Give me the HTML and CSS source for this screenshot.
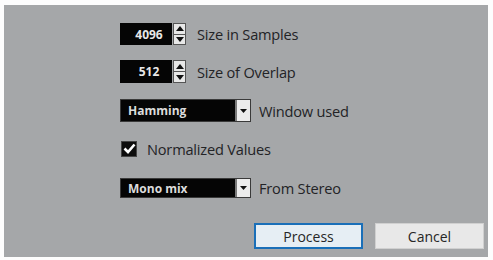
FILE: index.html
```html
<!DOCTYPE html>
<html>
<head>
<meta charset="utf-8">
<link rel="stylesheet" href="styles.css">
</head>
<body>
<div class="panel">
  <div class="form">
    <div class="row r1">
      <div class="spin">
        <div class="value">4096</div>
        <div class="arrows">
          <div class="arr"><svg width="8" height="5" viewBox="0 0 8 5"><path d="M0 5 L4 0 L8 5Z" fill="#111"/></svg></div>
          <div class="arr"><svg width="8" height="5" viewBox="0 0 8 5"><path d="M0 0 L4 5 L8 0Z" fill="#111"/></svg></div>
        </div>
      </div>
      <span class="label">Size in Samples</span>
    </div>
    <div class="row r2">
      <div class="spin">
        <div class="value">512</div>
        <div class="arrows">
          <div class="arr"><svg width="8" height="5" viewBox="0 0 8 5"><path d="M0 5 L4 0 L8 5Z" fill="#111"/></svg></div>
          <div class="arr"><svg width="8" height="5" viewBox="0 0 8 5"><path d="M0 0 L4 5 L8 0Z" fill="#111"/></svg></div>
        </div>
      </div>
      <span class="label">Size of Overlap</span>
    </div>
    <div class="row r3">
      <div class="select">
        <div class="sel-value">Hamming</div>
        <div class="sel-btn"><svg width="7" height="4" viewBox="0 0 7 4"><path d="M0 0 L3.5 4 L7 0Z" fill="#111"/></svg></div>
      </div>
      <span class="label">Window used</span>
    </div>
    <div class="row r4">
      <div class="check"><svg width="13" height="11" viewBox="0 0 13 11"><path d="M1.5 5.5 L5 9 L11.5 1.5" stroke="#fff" stroke-width="2.6" fill="none"/></svg></div>
      <span class="label">Normalized Values</span>
    </div>
    <div class="row r5">
      <div class="select short">
        <div class="sel-value">Mono mix</div>
        <div class="sel-btn"><svg width="7" height="4" viewBox="0 0 7 4"><path d="M0 0 L3.5 4 L7 0Z" fill="#111"/></svg></div>
      </div>
      <span class="label">From Stereo</span>
    </div>
  </div>
  <div class="buttons">
    <div class="btn primary">Process</div>
    <div class="btn">Cancel</div>
  </div>
</div>
</body>
</html>
```
FILE: styles.css
```css
html, body {
  margin: 0;
  padding: 0;
  background: #fdfdfd;
}
body {
  width: 493px;
  height: 260px;
  font-family: "Open Sans", "Noto Sans", sans-serif;
}
.panel {
  box-sizing: border-box;
  margin: 5px 5px 0 4px;
  width: 484px;
  height: 252px;
  background: #a5a7a9;
  padding: 18px 0 0 116px;
  display: flex;
  flex-direction: column;
}
.form {
  display: flex;
  flex-direction: column;
}
.row {
  display: flex;
  align-items: center;
}
.r1 { height: 22px; }
.r2 { height: 23px; margin-top: 15px; }
.r3 { height: 23px; margin-top: 16px; }
.r4 { height: 17px; margin-top: 18px; }
.r5 { height: 20px; margin-top: 21px; }
.label {
  font-size: 14.6px;
  color: #232326;
  letter-spacing: -0.2px;
}
.spin {
  display: flex;
  height: 100%;
  margin-right: 11px;
}
.value {
  width: 52px;
  background: #050505;
  color: #e8e8e8;
  font-weight: 700;
  font-size: 12px;
  display: flex;
  align-items: center;
  justify-content: center;
  padding-left: 6px;
  box-sizing: border-box;
}
.arrows {
  width: 13px;
  margin-left: 1px;
  display: flex;
  flex-direction: column;
  gap: 1px;
  background: #555;
  border: 1px solid #555;
  box-sizing: border-box;
}
.arr {
  flex: 1;
  background: #e8e8e8;
  display: flex;
  align-items: center;
  justify-content: center;
}
.select {
  display: flex;
  height: 100%;
  border: 1px solid #3a3a3a;
  box-sizing: border-box;
  width: 131px;
  margin-right: 8px;
}
.sel-value {
  flex: 1;
  background: #050505;
  color: #dcdcdc;
  font-weight: 700;
  font-size: 12px;
  display: flex;
  align-items: center;
  padding-left: 7px;
}
.sel-btn {
  width: 13px;
  background: #ececec;
  border-left: 2px solid #7a7a7a;
  display: flex;
  align-items: center;
  justify-content: center;
}
.check {
  width: 16px;
  height: 16px;
  background: #0d0d0d;
  border: 1px solid #444;
  box-sizing: border-box;
  display: flex;
  align-items: center;
  justify-content: center;
  margin-left: 1px;
  margin-right: 10px;
}
.buttons {
  display: flex;
  margin-top: 25px;
  margin-left: 134px;
  gap: 12px;
}
.btn {
  box-sizing: border-box;
  width: 109px;
  height: 26px;
  background: #e8e8e8;
  border: 1px solid #d0d0d0;
  display: flex;
  align-items: center;
  justify-content: center;
  font-size: 14px;
  color: #262626;
}
.btn.primary {
  background: #e6eef4;
  border: 2px solid #1a6fb8;
}
```
